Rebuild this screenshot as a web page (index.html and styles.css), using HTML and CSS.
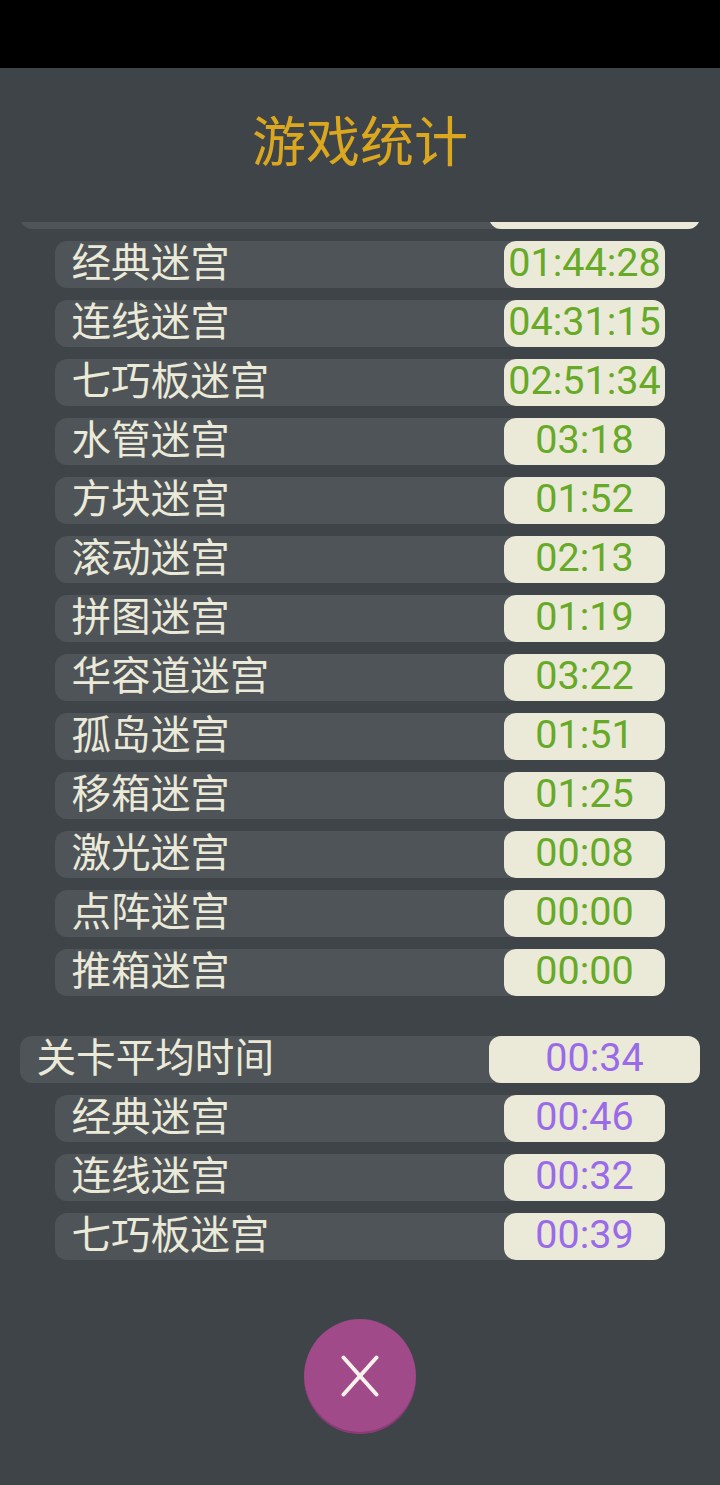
FILE: index.html
```html
<!DOCTYPE html>
<html lang="zh-CN">
<head>
<meta charset="utf-8">
<title>游戏统计</title>
<link rel="stylesheet" href="styles.css">
</head>
<body>
<div class="status-bar"></div>
<main class="panel">
  <h1 class="title">游戏统计</h1>
  <div class="scroller">
    <div class="list">
      <section class="group green">
        <div class="row main"><span class="label"></span><span class="value"></span></div>
        <div class="row sub"><span class="label">经典迷宫</span><span class="value long">01:44:28</span></div>
        <div class="row sub"><span class="label">连线迷宫</span><span class="value long">04:31:15</span></div>
        <div class="row sub"><span class="label">七巧板迷宫</span><span class="value long">02:51:34</span></div>
        <div class="row sub"><span class="label">水管迷宫</span><span class="value">03:18</span></div>
        <div class="row sub"><span class="label">方块迷宫</span><span class="value">01:52</span></div>
        <div class="row sub"><span class="label">滚动迷宫</span><span class="value">02:13</span></div>
        <div class="row sub"><span class="label">拼图迷宫</span><span class="value">01:19</span></div>
        <div class="row sub"><span class="label">华容道迷宫</span><span class="value">03:22</span></div>
        <div class="row sub"><span class="label">孤岛迷宫</span><span class="value">01:51</span></div>
        <div class="row sub"><span class="label">移箱迷宫</span><span class="value">01:25</span></div>
        <div class="row sub"><span class="label">激光迷宫</span><span class="value">00:08</span></div>
        <div class="row sub"><span class="label">点阵迷宫</span><span class="value">00:00</span></div>
        <div class="row sub"><span class="label">推箱迷宫</span><span class="value">00:00</span></div>
      </section>
      <section class="group purple">
        <div class="row main"><span class="label">关卡平均时间</span><span class="value">00:34</span></div>
        <div class="row sub"><span class="label">经典迷宫</span><span class="value">00:46</span></div>
        <div class="row sub"><span class="label">连线迷宫</span><span class="value">00:32</span></div>
        <div class="row sub"><span class="label">七巧板迷宫</span><span class="value">00:39</span></div>
      </section>
    </div>
  </div>
  <button class="close" type="button" aria-label="关闭">
    <svg class="close-icon" viewBox="0 0 40 42" width="40" height="42"><path d="M3.5 2.5 L36.5 39.5 M36.5 2.5 L3.5 39.5"/></svg>
  </button>
</main>
</body>
</html>
```
FILE: styles.css
```css
* { box-sizing: border-box; }
html, body { margin: 0; height: 100%; }
body {
  background: #000;
  display: flex;
  flex-direction: column;
  font-family: Roboto, "Noto Sans CJK SC", sans-serif;
}
.status-bar { height: 68px; flex: none; background: #000; }
.panel {
  flex: 1;
  display: flex;
  flex-direction: column;
  align-items: center;
  background: #3f4448;
}
.title {
  margin: 0;
  height: 154px;
  padding-top: 37px;
  font: 400 54px/68px "Noto Sans CJK SC", sans-serif;
  color: #dba71f;
}
.scroller {
  width: 100%;
  height: 1050px;
  flex: none;
  overflow: hidden;
  padding: 0 20px;
}
.list {
  margin-top: -40px;
  display: flex;
  flex-direction: column;
  gap: 40px;
}
.group { display: flex; flex-direction: column; gap: 12px; }
.row {
  height: 47px;
  display: flex;
  align-items: stretch;
  justify-content: space-between;
  border-radius: 12px;
  background: #4e5458;
}
.sub { margin: 0 35px; }
.label {
  font: 400 39.6px/37px "Noto Sans CJK SC", sans-serif;
  color: #ebe9d8;
  padding-left: 16.5px;
  white-space: nowrap;
}
.value {
  flex: none;
  width: 161px;
  text-align: center;
  border-radius: 12px;
  background: #ebe9d8;
  font: 400 39.5px/44px Roboto, sans-serif;
}
.main .value { width: 211px; }
.green .value { color: #66aa28; }
.purple .value { color: #9a6be8; }
.close {
  margin-top: 47px;
  width: 112px;
  height: 115px;
  padding: 0 0 2px;
  border: 0;
  border-radius: 50%;
  background: #a04a8a;
  box-shadow: inset 0 -2px 0 #8a3a76;
  display: flex;
  align-items: center;
  justify-content: center;
}
.close-icon { fill: none; stroke: #f6f1ea; stroke-width: 4; stroke-linecap: round; }
```
